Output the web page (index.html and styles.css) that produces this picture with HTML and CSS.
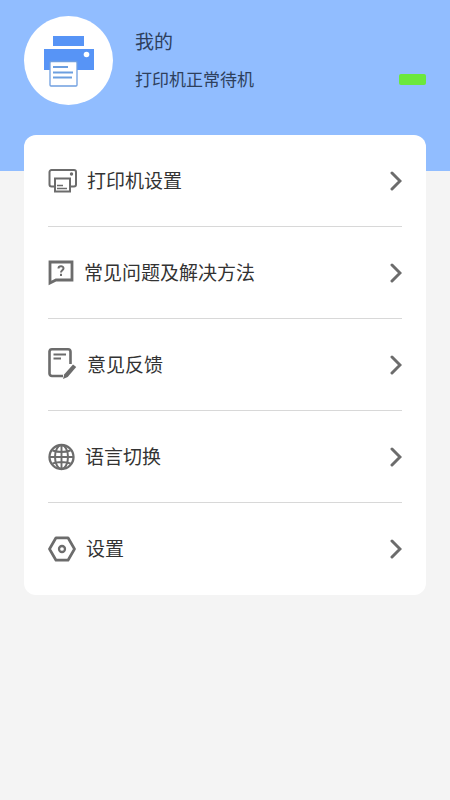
FILE: index.html
```html
<!DOCTYPE html>
<html lang="zh-CN">
<head>
<meta charset="utf-8">
<meta name="viewport" content="width=device-width, initial-scale=1">
<title>我的</title>
<link rel="stylesheet" href="styles.css">
</head>
<body>
<header class="profile">
  <div class="avatar">
    <svg width="52" height="52" viewBox="0 0 52 52" aria-hidden="true">
      <path fill="#5794f6" d="M10 1h31v10H10zM1 14h50v21H1z"/>
      <circle cx="43.500" cy="19.500" r="2.800" fill="#fff"/>
      <rect x="7" y="26.500" width="27" height="24.500" rx="1" fill="#fff" stroke="#6f9fe0" stroke-width="1.300"/>
      <path d="M10 32h15M10 37.500h20M10 42.500h19" stroke="#6c9fdf" stroke-width="2"/>
    </svg>
  </div>
  <div class="info">
    <h1 class="name">我的</h1>
    <div class="state">
      <p class="status">打印机正常待机</p>
      <span class="battery" role="img" aria-label="电量"></span>
    </div>
  </div>
</header>
<main>
  <nav class="menu">
    <a class="item" href="#printer">
      <svg width="29" height="26" viewBox="0 0 29 26" fill="none" stroke="#6c6c6c" stroke-width="2" aria-hidden="true">
        <path d="M6 18.500H3.500a2 2 0 0 1-2-2V4a2 2 0 0 1 2-2H26a2 2 0 0 1 2 2v12.500a2 2 0 0 1-2 2h-3.500"/>
        <path d="M7 10.500h15v13H7z"/>
        <path d="M9 17.500h6M9 20.500h10" stroke-width="1.500"/>
        <circle cx="23.500" cy="6" r="1.700" fill="#6c6c6c" stroke="none"/>
      </svg>
      <span class="label">打印机设置</span>
      <svg class="arrow" width="12" height="20" viewBox="0 0 12 20" aria-hidden="true"><path d="M2 2l8 8-8 8"/></svg>
    </a>
    <a class="item" href="#faq">
      <svg width="26" height="26" viewBox="0 0 26 26" fill="none" stroke="#6c6c6c" aria-hidden="true">
        <path d="M2 2h22v18H8l-6 3z" stroke-width="2.800"/>
        <path d="M10.500 8.500c0-3 5-3 5-.2 0 2-2.500 1.900-2.500 4.200M13 13.800v2.200" stroke-width="2"/>
      </svg>
      <span class="label">常见问题及解决方法</span>
      <svg class="arrow" width="12" height="20" viewBox="0 0 12 20" aria-hidden="true"><path d="M2 2l8 8-8 8"/></svg>
    </a>
    <a class="item" href="#feedback">
      <svg width="29" height="34" viewBox="0 0 29 34" fill="none" stroke="#6c6c6c" aria-hidden="true">
        <path d="M15 28H4a2.500 2.500 0 0 1-2.500-2.500V3.500A2.500 2.500 0 0 1 4 1.300h16a2.500 2.500 0 0 1 2.500 2.500V16" stroke-width="2.600"/>
        <path d="M5.500 6.500h12.500M5.500 10.500h7.500" stroke-width="1.900"/>
        <path d="M25 16.500l3.200 2.500-8.500 10-4.700 2 1.300-4.800z" fill="#6c6c6c" stroke="none"/>
      </svg>
      <span class="label">意见反馈</span>
      <svg class="arrow" width="12" height="20" viewBox="0 0 12 20" aria-hidden="true"><path d="M2 2l8 8-8 8"/></svg>
    </a>
    <a class="item" href="#language">
      <svg width="27" height="28" viewBox="0 0 27 28" fill="none" stroke="#6c6c6c" stroke-width="2.300" aria-hidden="true">
        <circle cx="13.500" cy="14" r="12"/>
        <ellipse cx="13.500" cy="14" rx="6.500" ry="12" stroke-width="2"/>
        <path d="M13.500 2v24M1.500 14h24M4.500 7.500q9 3 18 0M4.500 20.500q9-3 18 0" stroke-width="1.900"/>
      </svg>
      <span class="label">语言切换</span>
      <svg class="arrow" width="12" height="20" viewBox="0 0 12 20" aria-hidden="true"><path d="M2 2l8 8-8 8"/></svg>
    </a>
    <a class="item" href="#settings">
      <svg width="28" height="26" viewBox="0 0 28 26" fill="none" stroke="#6c6c6c" stroke-linejoin="round" aria-hidden="true">
        <path d="M8 1.800h12L26.500 13 20 24.200H8L1.500 13z" stroke-width="2.700"/>
        <circle cx="14" cy="13" r="3" stroke-width="2.300"/>
      </svg>
      <span class="label">设置</span>
      <svg class="arrow" width="12" height="20" viewBox="0 0 12 20" aria-hidden="true"><path d="M2 2l8 8-8 8"/></svg>
    </a>
  </nav>
</main>
</body>
</html>
```
FILE: styles.css
```css
* {
  box-sizing: border-box;
}

body {
  margin: 0;
  min-height: 100vh;
  background: #f4f4f4;
  color: #333;
  font-family: "Noto Sans CJK SC", sans-serif;
}

.profile {
  display: flex;
  align-items: flex-start;
  gap: 22px;
  padding: 16px 24px 66px;
  background: #91bdff;
  color: #2e405c;
}

.avatar {
  display: flex;
  flex: none;
  align-items: center;
  justify-content: center;
  width: 89px;
  height: 89px;
  border-radius: 50%;
  background: #fff;
}

.info {
  flex: 1;
  padding-top: 11px;
}

.name,
.status {
  margin: 0;
  font-weight: 400;
}

.name {
  font-size: 19px;
  line-height: 28px;
}

.state {
  display: flex;
  align-items: center;
  justify-content: space-between;
  margin-top: 10px;
}

.status {
  font-size: 17px;
  line-height: 28px;
}

.battery {
  width: 27px;
  height: 11px;
  border-radius: 2px;
  background: #6be83c;
}

.menu {
  margin: -36px 24px 0;
  padding: 0 24px;
  border-radius: 12px;
  background: #fff;
}

.item {
  display: flex;
  align-items: center;
  gap: 10px;
  height: 92px;
  border-bottom: 1px solid #d8d8d8;
  color: inherit;
  text-decoration: none;
}

.item:last-child {
  border-bottom: 0;
}

.label {
  flex: 1;
  padding-bottom: 2px;
  font-size: 19px;
  line-height: 28px;
}

.arrow {
  fill: none;
  stroke: #6c6c6c;
  stroke-width: 3;
  stroke-linecap: round;
}
```
